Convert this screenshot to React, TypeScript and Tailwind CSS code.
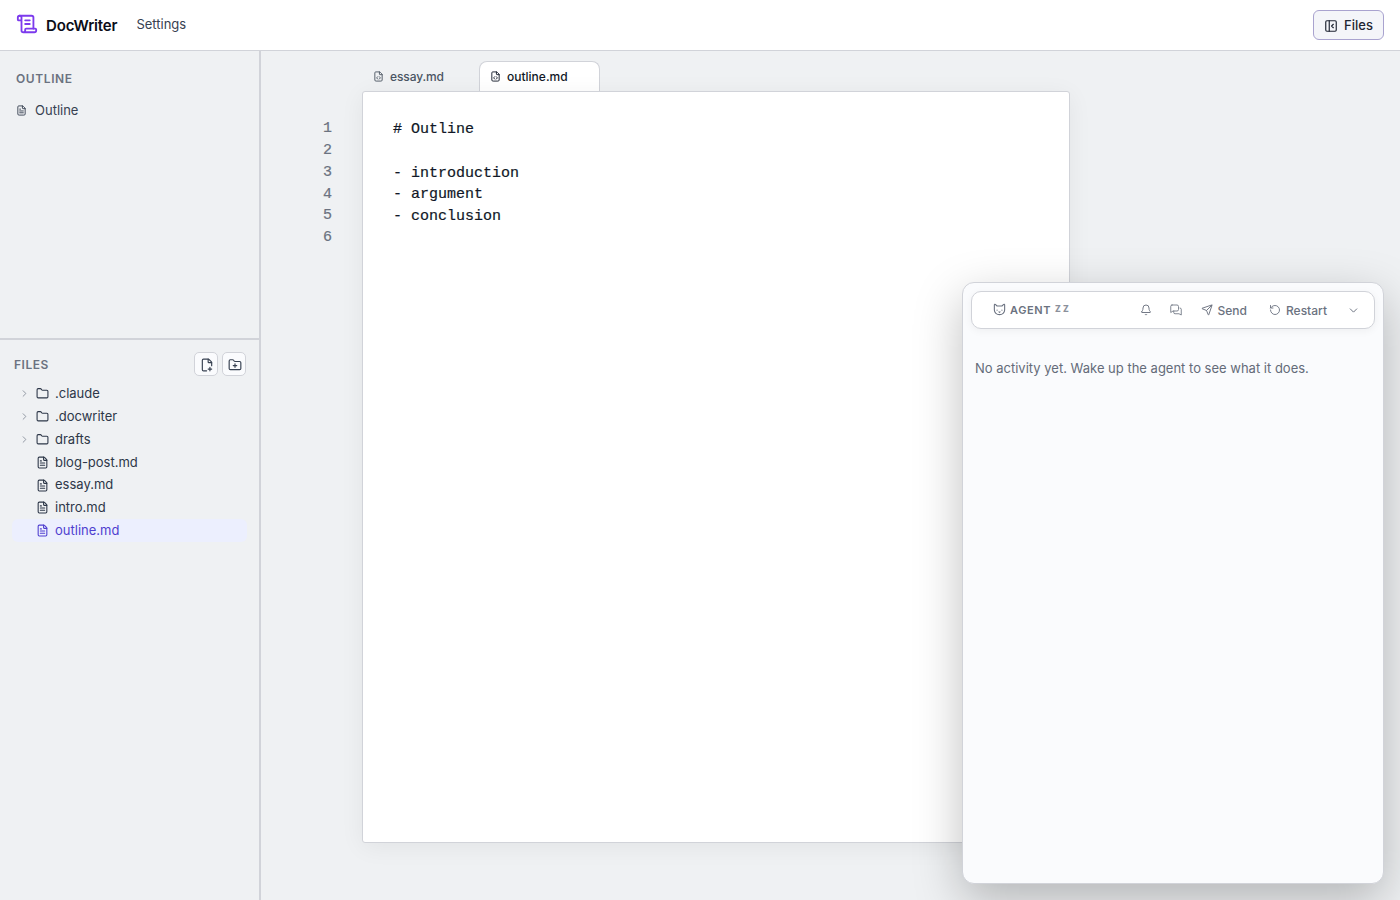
import type { ReactNode } from "react";
import {
  Bell,
  ChevronDown,
  ChevronRight,
  FileCode,
  FileText,
  Folder,
  FolderPlus,
  PanelLeftClose,
  RotateCcw,
  ScrollText,
  Send,
} from "lucide-react";

const folders = [".claude", ".docwriter", "drafts"];
const files = ["blog-post.md", "essay.md", "intro.md", "outline.md"];
const activeFile = "outline.md";
const lines = ["# Outline", "", "- introduction", "- argument", "- conclusion", ""];

function Header() {
  return (
    <header className="flex h-[51px] shrink-0 items-center border-b border-[#d1d3d9] bg-white pr-4 pl-4">
      <ScrollText className="mb-[2px] size-[22px] text-[#7c3aed]" aria-hidden />
      <h1 className="mt-[2px] ml-2 text-[15px] font-semibold tracking-[-0.15px] text-[#0b0d18]">DocWriter</h1>
      <button className="ml-[19px] text-[13px] text-[#374151]">Settings</button>
      <button className="ml-auto flex h-[30px] w-[71px] items-center justify-center gap-[6px] rounded-md border border-[#a9a3cf] bg-[#f4f5f9] text-[13px] font-medium text-[#1f2533]">
        <PanelLeftClose className="mt-px size-[14px]" aria-hidden />
        <span className="mt-[2px]">Files</span>
      </button>
    </header>
  );
}

function FilePlusIcon() {
  return (
    <svg viewBox="0 0 24 24" className="size-[14px]" fill="none" stroke="currentColor" strokeWidth="2" strokeLinecap="round" strokeLinejoin="round" aria-hidden>
      <path d="M11.35 22H6a2 2 0 0 1-2-2V4a2 2 0 0 1 2-2h8a2.4 2.4 0 0 1 1.706.706l3.588 3.588A2.4 2.4 0 0 1 20 8v5.35" />
      <path d="M14 2v5a1 1 0 0 0 1 1h5M14 19h6M17 16v6" />
    </svg>
  );
}

function CatIcon() {
  return (
    <svg viewBox="0 0 24 24" className="mb-px size-[13px]" fill="none" stroke="currentColor" strokeWidth="2" strokeLinecap="round" strokeLinejoin="round" aria-hidden>
      <path d="M2.5 3.500c0-1.200 1-1.500 1.800-.8L7.500 5.500h9l3.200-2.800c.8-.7 1.800-.4 1.800.8V13c0 4.700-4.200 8.500-9.500 8.500S2.500 17.700 2.500 13z" />
      <path d="M7.500 13v.5M16.500 13v.5M11 16.500l1 .8 1-.8" />
    </svg>
  );
}

function ChatsIcon() {
  return (
    <svg viewBox="0 0 24 24" className="size-3" fill="none" stroke="currentColor" strokeWidth="1.7" strokeLinecap="round" strokeLinejoin="round" aria-hidden>
      <path d="M4 2h10a3 3 0 0 1 3 3v6a3 3 0 0 1-3 3H6l-4.500 3V4.500A2.500 2.500 0 0 1 4 2z" />
      <path d="M20 8a2.500 2.500 0 0 1 2.500 2.500V22L18 19.500h-8A2.500 2.500 0 0 1 7.500 17v-3" />
    </svg>
  );
}

function ToolButton({ children }: { children: ReactNode }) {
  return (
    <button className="flex size-6 items-center justify-center rounded-[5px] border border-[#d1d3d9] bg-[#fafbfd] pt-px pl-px text-[#374151]">
      {children}
    </button>
  );
}

function Sidebar() {
  return (
    <aside className="flex w-[261px] shrink-0 flex-col border-r-2 border-[#d1d3d9]">
      <section className="h-[289px] shrink-0 border-b-2 border-[#d1d3d9] px-4 pt-5">
        <h2 className="text-xs leading-4 font-semibold tracking-[0.6px] text-[#6b7280]">OUTLINE</h2>
        <div className="mt-[14px] flex h-5 items-center gap-2 text-[13px] text-[#374151]">
          <FileText className="mb-px size-[11px]" aria-hidden />
          Outline
        </div>
      </section>
      <section className="px-3 pt-3">
        <div className="flex h-6 items-center gap-1 pr-[1px] pl-[2px]">
          <h2 className="mt-[2px] mr-auto text-xs font-semibold tracking-[0.5px] text-[#6b7280]">FILES</h2>
          <ToolButton>
            <FilePlusIcon />
          </ToolButton>
          <ToolButton>
            <FolderPlus className="size-[14px]" aria-hidden />
          </ToolButton>
        </div>
        <div className="mt-[6.4px] text-[13px] text-[#2d3748]">
          {folders.map((name) => (
            <div key={name} className="flex h-[22.85px] items-center pl-[7px]">
              <ChevronRight className="size-[11px] text-[#8a909c]" aria-hidden />
              <Folder className="mr-[6px] ml-[6px] size-[13px]" aria-hidden />
              {name}
            </div>
          ))}
          {files.map((name) => (
            <div
              key={name}
              className={`flex h-[22.8px] items-center rounded-md pl-6 ${name === activeFile ? "bg-[#eceffe] text-[#4f3fd0]" : ""}`}
            >
              <FileText className="mr-[6px] size-[13px]" aria-hidden />
              {name}
            </div>
          ))}
        </div>
      </section>
    </aside>
  );
}

function Editor() {
  return (
    <main className="flex min-w-0 flex-1 flex-col pt-[10px]">
      <div className="ml-[101px] flex h-[30px] text-xs font-medium">
        <div className="flex w-[117px] items-center gap-[6px] pt-px pl-[11px] tracking-[-0.1px] text-[#4b5563]">
          <FileCode className="size-[11px]" aria-hidden />
          essay.md
        </div>
        <div className="flex w-[121px] items-center gap-[6px] rounded-t-lg border border-b-0 border-[#d1d3d9] bg-white pl-[10px] text-[#111827]">
          <FileCode className="size-[11px]" aria-hidden />
          outline.md
        </div>
      </div>
      <div className="flex h-[752px] font-['Liberation_Mono',monospace] text-[15px] leading-[21.75px] [-webkit-text-stroke:0.2px]">
        <div className="w-[101px] shrink-0 pt-[27.3px] pr-[30px] text-right text-[#6b7280]">
          {lines.map((_, i) => (
            <div key={i}>{i + 1}</div>
          ))}
        </div>
        <div className="w-[708px] shrink-0 rounded-[3px] border border-[#d1d3d9] bg-white pt-[27px] pl-[30px] text-[#111827] shadow-[0_4px_24px_rgba(0,0,0,0.06)]">
          {lines.map((line, i) => (
            <div key={i} className="h-[21.75px] whitespace-pre">
              {line}
            </div>
          ))}
        </div>
      </div>
    </main>
  );
}

function AgentPanel() {
  return (
    <section className="absolute right-4 bottom-4 flex h-[602px] w-[422px] flex-col rounded-xl border border-[#d1d3d9] bg-[#fafbfd] p-2 shadow-[0_16px_48px_rgba(0,0,0,0.25)]">
      <div className="flex h-[38px] items-center rounded-[10px] border border-[#d1d3d9] bg-white pr-[14px] pl-[21px] text-[#6b7280] shadow-[0_2px_8px_rgba(0,0,0,0.05)]">
        <CatIcon />
        <span className="ml-1 text-[11px] font-semibold tracking-[0.6px]">AGENT</span>
        <span className="mb-[2px] ml-1 flex gap-[2px] text-[8.5px] leading-3 font-extrabold text-[#8b909b]">
          <span>Z</span>
          <span>Z</span>
        </span>
        <div className="ml-auto flex items-center text-xs font-medium">
          <Bell className="mr-[18px] size-3" strokeWidth={1.9} aria-hidden />
          <ChatsIcon />
          <Send className="mr-[5px] ml-[19px] size-3" strokeWidth={1.9} aria-hidden />
          <span className="mt-[2px]">Send</span>
          <RotateCcw className="mr-[5px] ml-[22px] size-3" strokeWidth={1.8} aria-hidden />
          <span className="mt-[2px]">Restart</span>
          <ChevronDown className="ml-5 size-[13px]" strokeWidth={1.8} aria-hidden />
        </div>
      </div>
      <p className="mt-[29px] ml-1 text-[13px] leading-5 text-[#646b79]">
        No activity yet. Wake up the agent to see what it does.
      </p>
    </section>
  );
}

export default function App() {
  return (
    <div className="relative flex h-screen flex-col overflow-hidden bg-[#eff1f3] font-[Inter,sans-serif]">
      <Header />
      <div className="flex min-h-0 flex-1">
        <Sidebar />
        <Editor />
      </div>
      <AgentPanel />
    </div>
  );
}
